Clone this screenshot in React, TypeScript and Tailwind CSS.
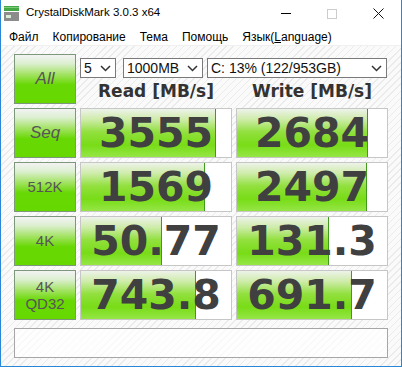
import React from "react";

type Row = {
  label: string;
  read: string;
  readBar: number;
  write: string;
  writeBar: number;
};

// ширина полосы в px (внутри 150px)
const rows: Row[] = [
  { label: "Seq", read: "3555", readBar: 135, write: "2684", writeBar: 131 },
  { label: "512K", read: "1569", readBar: 124, write: "2497", writeBar: 130 },
  { label: "4K", read: "50.77", readBar: 81, write: "131.3", writeBar: 92 },
  { label: "4K QD32", read: "743.8", readBar: 115, write: "691.7", writeBar: 115 },
];

const btn =
  "w-[62px] h-[50px] border border-[#7d977d] bg-[linear-gradient(to_bottom,#f3f3f3_0%,#dcefd0_18%,#9fe25c_42%,#68d804_62%,#66d800_100%)] flex flex-col items-center justify-center text-[#555] font-['Liberation_Sans',sans-serif]";

const ValueBox = ({ value, bar }: { value: string; bar: number }) => (
  <div className="relative w-[152px] h-[50px] border border-[#c6c6c6] bg-white overflow-hidden">
    <div
      className="absolute left-0 top-0 bottom-0 border-r border-[#3f9a1e] bg-[linear-gradient(to_bottom,#eef2ea_0%,#cdeca8_22%,#92e03e_48%,#78dc16_75%,#96e646_100%)]"
      style={{ width: bar }}
    />
    <div className="relative h-full flex items-center justify-center text-[41px] font-bold text-[#404040] font-['DejaVu_Sans',sans-serif] leading-none">
      {value}
    </div>
  </div>
);

const Chevron = () => (
  <svg width="11" height="7" viewBox="0 0 11 7" className="shrink-0">
    <path d="M1 1 L5.5 5.5 L10 1" fill="none" stroke="#333" strokeWidth="1.5" />
  </svg>
);

const Select = ({ text, width }: { text: string; width: string }) => (
  <div
    className={`${width} h-[20px] border border-[#7a7a7a] bg-white flex items-center justify-between pl-[3px] pr-[4px] text-[14px] text-[#111] font-['Liberation_Sans',sans-serif]`}
  >
    <span>{text}</span>
    <Chevron />
  </div>
);

const App = () => {
  return (
    <div className="w-[402px] h-[367px] flex flex-col bg-white border-l border-r border-b border-[#2a86d6] font-['Liberation_Sans',sans-serif] overflow-hidden">
      {/* Заголовок окна */}
      <div className="h-[28px] flex items-center shrink-0">
        <svg width="15" height="15" viewBox="0 0 15 15" className="ml-[3px] mt-[-2px]">
          <rect x="0" y="0" width="15" height="5" fill="#43a843" />
          <rect x="0" y="1" width="15" height="1" fill="#7ccc7c" />
          <rect x="0" y="6" width="15" height="9" fill="#8c8c8c" />
          <rect x="2" y="9" width="5" height="3" fill="#d8ecd8" />
        </svg>
        <span className="ml-[7px] text-[11.5px] text-black mt-[-2px]">CrystalDiskMark 3.0.3 x64</span>
        <div className="ml-auto flex items-center h-full">
          <div className="w-[46px] flex justify-center">
            <div className="w-[10px] h-px bg-black mt-[-1px]" />
          </div>
          <div className="w-[46px] flex justify-center">
            <div className="w-[10px] h-[10px] border border-[#cccccc] mt-[-1px]" />
          </div>
          <div className="w-[46px] flex justify-center">
            <svg width="11" height="11" viewBox="0 0 11 11" className="mt-[-1px]">
              <path d="M0.5 0.5 L10.5 10.5 M10.5 0.5 L0.5 10.5" stroke="#111" strokeWidth="1" />
            </svg>
          </div>
        </div>
      </div>

      {/* Меню */}
      <div className="h-[17px] flex items-center pl-[1px] text-[12px] text-black shrink-0">
        <span className="px-[7px]">Файл</span>
        <span className="px-[7px]">Копирование</span>
        <span className="px-[7px]">Тема</span>
        <span className="px-[7px]">Помощь</span>
        <span className="px-[7px]">
          Язык(<span className="underline">L</span>anguage)
        </span>
      </div>

      {/* Основная область */}
      <div className="flex-1 pl-[13px] pt-[8px] border-t border-[#f0f0f0] bg-[repeating-linear-gradient(135deg,#fafafa_0px,#fafafa_4px,#ebebeb_4px,#ebebeb_5px)] flex flex-col gap-[4px]">
        <div className="flex gap-[4px] h-[50px]">
          <div className={btn}>
            <span className="italic text-[17px]">All</span>
          </div>
          <div className="w-[308px] h-[50px] flex flex-col">
            <div className="flex mt-[4px]">
              <Select text="5" width="w-[36px]" />
              <div className="w-[7px]" />
              <Select text="1000MB" width="w-[80px]" />
              <div className="w-[4px]" />
              <Select text="C: 13% (122/953GB)" width="w-[180px]" />
            </div>
            <div className="flex h-[26px] items-center text-[17px] leading-[20px] font-bold text-[#333] font-['DejaVu_Sans',sans-serif]">
              <div className="w-[152px] text-center">Read [MB/s]</div>
              <div className="w-[4px]" />
              <div className="w-[152px] text-center">Write [MB/s]</div>
            </div>
          </div>
        </div>

        {rows.map((r, i) => (
          <div key={i} className="flex gap-[4px]">
            <div className={btn}>
              {r.label === "Seq" ? (
                <span className="italic text-[17px]">Seq</span>
              ) : r.label === "4K QD32" ? (
                <>
                  <span className="text-[15px] leading-[17px]">4K</span>
                  <span className="text-[15px] leading-[17px]">QD32</span>
                </>
              ) : (
                <span className="text-[15px]">{r.label}</span>
              )}
            </div>
            <ValueBox value={r.read} bar={r.readBar} />
            <ValueBox value={r.write} bar={r.writeBar} />
          </div>
        ))}

        <div className="mt-[4px] w-[374px] h-[30px] border border-[#a6a6a6] bg-white/70" />
      </div>
    </div>
  );
};

export default App;
